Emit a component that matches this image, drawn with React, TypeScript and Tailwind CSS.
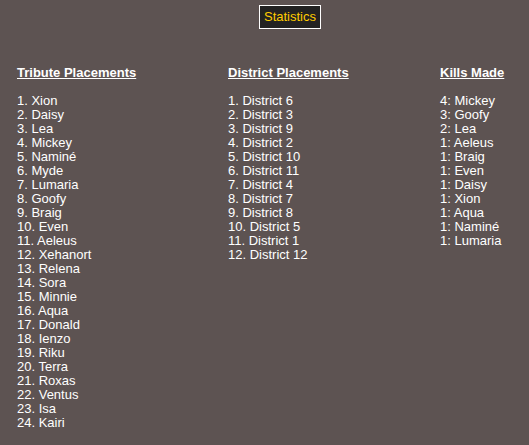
const tributes = [
  'Xion', 'Daisy', 'Lea', 'Mickey', 'Naminé', 'Myde', 'Lumaria', 'Goofy', 'Braig', 'Even',
  'Aeleus', 'Xehanort', 'Relena', 'Sora', 'Minnie', 'Aqua', 'Donald', 'Ienzo', 'Riku', 'Terra',
  'Roxas', 'Ventus', 'Isa', 'Kairi',
];

const districts = [6, 3, 9, 2, 10, 11, 4, 7, 8, 5, 1, 12];

const kills: [number, string][] = [
  [4, 'Mickey'], [3, 'Goofy'], [2, 'Lea'], [1, 'Aeleus'], [1, 'Braig'], [1, 'Even'],
  [1, 'Daisy'], [1, 'Xion'], [1, 'Aqua'], [1, 'Naminé'], [1, 'Lumaria'],
];

function Column({ title, items, width }: { title: string; items: string[]; width: string }) {
  return (
    <div className={width}>
      <div className="font-bold underline">{title}</div>
      <div className="h-[14px]" />
      {items.map((t, i) => (
        <div key={i}>{t}</div>
      ))}
    </div>
  );
}

export default function App() {
  return (
    <div className="min-h-[445px] w-[529px] bg-[#5d5352] text-white text-[13px] leading-[14px] font-['Liberation_Sans',Arial,sans-serif]">
      <div className="pt-[5px] pl-[259px]">
        <span className="inline-block border border-white bg-[#222222] px-[4px] py-[4px] text-[#ffcc00]">
          Statistics
        </span>
      </div>
      <div className="flex pl-[17px] pt-[37px]">
        <Column title="Tribute Placements" width="w-[211px]" items={tributes.map((t, i) => `${i + 1}. ${t}`)} />
        <Column title="District Placements" width="w-[212px]" items={districts.map((d, i) => `${i + 1}. District ${d}`)} />
        <Column title="Kills Made" width="flex-1" items={kills.map(([n, t]) => `${n}: ${t}`)} />
      </div>
    </div>
  );
}
